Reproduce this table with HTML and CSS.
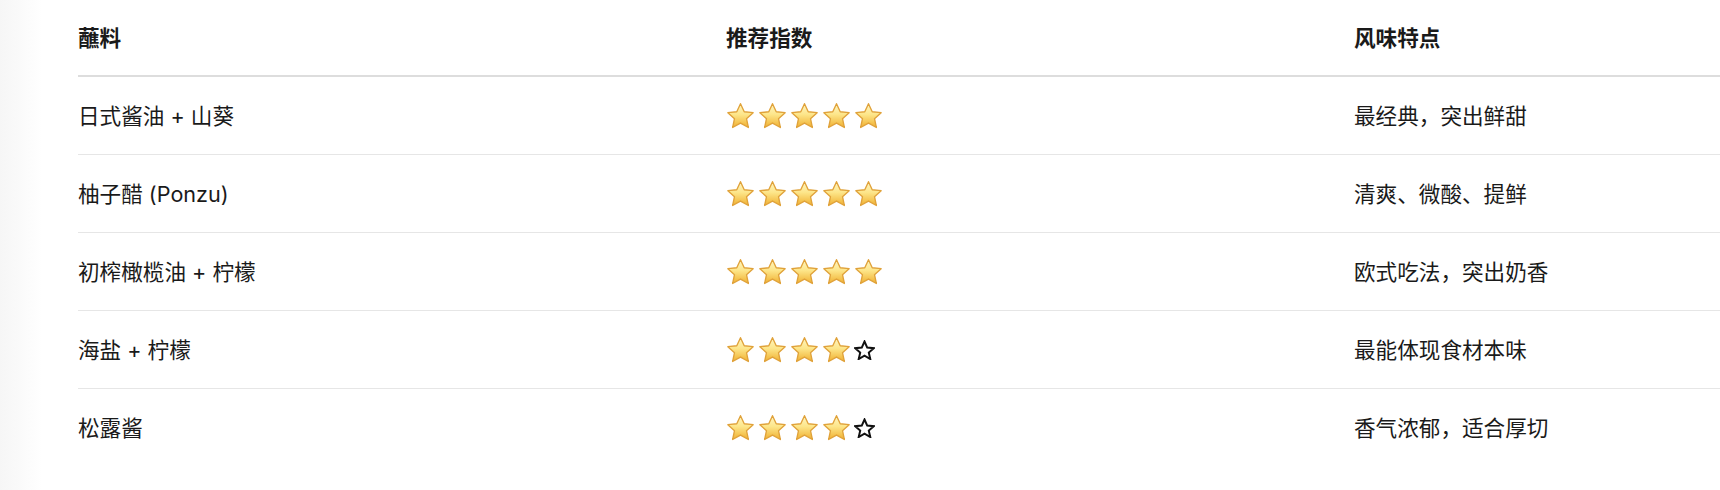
FILE: index.html
```html
<!DOCTYPE html>
<html lang="zh-CN">
<head>
<meta charset="utf-8">
<title>蘸料推荐</title>
<link rel="stylesheet" href="styles.css">
</head>
<body>
<svg width="0" height="0" class="defs" aria-hidden="true">
  <defs>
    <linearGradient id="starFill" x1="0" y1="0" x2="0" y2="1">
      <stop offset="0" stop-color="#fff6c4"/>
      <stop offset="0.45" stop-color="#fde68a"/>
      <stop offset="1" stop-color="#f0b030"/>
    </linearGradient>
    <symbol id="star" viewBox="0 0 28 27">
      <path d="M14 1.6 L17.6 9.4 L26.2 10.3 L19.8 16.1 L21.6 24.6 L14 20.3 L6.4 24.6 L8.2 16.1 L1.8 10.3 L10.4 9.4 Z" fill="url(#starFill)" stroke="#e0a23a" stroke-width="1.3" stroke-linejoin="round"/>
    </symbol>
    <symbol id="starOutline" viewBox="0 0 20 19">
      <path d="M10 1.4 L12.6 7.2 L18.8 7.8 L14.1 12 L15.5 18.1 L10 14.9 L4.5 18.1 L5.9 12 L1.2 7.8 L7.4 7.2 Z" fill="none" stroke="#111" stroke-width="1.9" stroke-linejoin="miter"/>
    </symbol>
  </defs>
</svg>
<main class="page">
  <table class="sauce-table">
    <colgroup>
      <col class="c-name">
      <col class="c-rate">
      <col class="c-note">
    </colgroup>
    <thead>
      <tr>
        <th>蘸料</th>
        <th>推荐指数</th>
        <th>风味特点</th>
      </tr>
    </thead>
    <tbody>
      <tr>
        <td>日式酱油 + 山葵</td>
        <td><span class="stars"><svg class="st"><use href="#star"/></svg><svg class="st"><use href="#star"/></svg><svg class="st"><use href="#star"/></svg><svg class="st"><use href="#star"/></svg><svg class="st"><use href="#star"/></svg></span></td>
        <td>最经典，突出鲜甜</td>
      </tr>
      <tr>
        <td>柚子醋 (Ponzu)</td>
        <td><span class="stars"><svg class="st"><use href="#star"/></svg><svg class="st"><use href="#star"/></svg><svg class="st"><use href="#star"/></svg><svg class="st"><use href="#star"/></svg><svg class="st"><use href="#star"/></svg></span></td>
        <td>清爽、微酸、提鲜</td>
      </tr>
      <tr>
        <td>初榨橄榄油 + 柠檬</td>
        <td><span class="stars"><svg class="st"><use href="#star"/></svg><svg class="st"><use href="#star"/></svg><svg class="st"><use href="#star"/></svg><svg class="st"><use href="#star"/></svg><svg class="st"><use href="#star"/></svg></span></td>
        <td>欧式吃法，突出奶香</td>
      </tr>
      <tr>
        <td>海盐 + 柠檬</td>
        <td><span class="stars"><svg class="st"><use href="#star"/></svg><svg class="st"><use href="#star"/></svg><svg class="st"><use href="#star"/></svg><svg class="st"><use href="#star"/></svg><svg class="so"><use href="#starOutline"/></svg></span></td>
        <td>最能体现食材本味</td>
      </tr>
      <tr>
        <td>松露酱</td>
        <td><span class="stars"><svg class="st"><use href="#star"/></svg><svg class="st"><use href="#star"/></svg><svg class="st"><use href="#star"/></svg><svg class="st"><use href="#star"/></svg><svg class="so"><use href="#starOutline"/></svg></span></td>
        <td>香气浓郁，适合厚切</td>
      </tr>
    </tbody>
  </table>
</main>
</body>
</html>
```

FILE: styles.css
```css
html, body {
  margin: 0;
  padding: 0;
}
body {
  background: linear-gradient(to right, #f6f6f6 0px, #fafafa 20px, #ffffff 42px) no-repeat;
  background-color: #fff;
  min-height: 490px;
  font-family: Inter, "Noto Sans CJK SC", "Noto Sans", sans-serif;
  color: #1a1a1a;
  overflow: hidden;
}
.defs {
  position: absolute;
  width: 0;
  height: 0;
}
.page {
  padding-left: 78px;
}
.sauce-table {
  width: 1642px;
  border-collapse: collapse;
  table-layout: fixed;
  font-size: 21.6px;
}
.c-name { width: 648px; }
.c-rate { width: 628px; }
.c-note { width: auto; }
.sauce-table th,
.sauce-table td {
  text-align: left;
  padding: 21px 0 21px 0;
  line-height: 34px;
  vertical-align: middle;
  white-space: nowrap;
}
.sauce-table th {
  font-weight: 700;
  border-bottom: 2px solid #dddddd;
  padding-top: 21px;
  padding-bottom: 20px;
}
.sauce-table tbody td {
  border-bottom: 1px solid #e6e6e6;
  padding-top: 22px;
  padding-bottom: 21px;
}
.sauce-table tbody tr:last-child td {
  border-bottom: none;
}
.stars {
  display: flex;
  align-items: center;
  height: 34px;
}
.st {
  width: 29px;
  height: 28px;
  margin-right: 3px;
  flex: none;
}
.so {
  width: 21px;
  height: 20px;
  margin-left: 0;
  flex: none;
}
```
